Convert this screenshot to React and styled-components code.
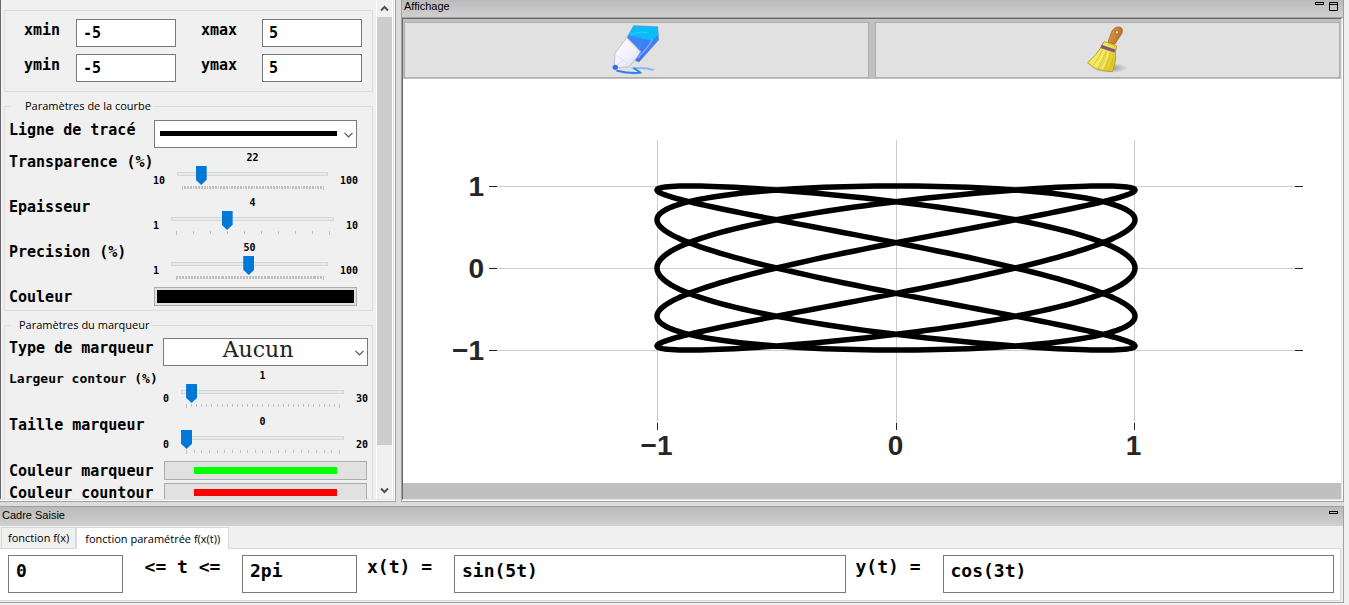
import React, { useState } from 'react';
import styled, { createGlobalStyle } from 'styled-components';

const mono = '"DejaVu Sans Mono", monospace';
const ui = '"Open Sans", "Noto Sans", sans-serif';

const GlobalStyle = createGlobalStyle`
  * {
    box-sizing: border-box;
  }
  body {
    margin: 0;
    background: #f0f0f0;
    color: #000;
    font-family: ${ui};
  }
  button, input, select {
    font: inherit;
    color: inherit;
    margin: 0;
  }
`;

const Slider = ({ id, min, max, start, loose }) => {
  const [value, setValue] = useState(start);
  const steps = max - min;
  const ticks = Array.from({ length: steps + 1 }, (_, i) => i);

  return (
    <SliderWrapper $loose={loose}>
      <span>{min}</span>
      <div className="track">
        <output htmlFor={id}>{value}</output>
        <Range
          type="range"
          id={id}
          min={min}
          max={max}
          value={value}
          onChange={(e) => setValue(Number(e.target.value))}
        />
        <svg height="5" aria-hidden="true">
          {ticks.map((i) => (
            <rect
              key={i}
              x={`${(i / steps) * 100}%`}
              width="1"
              height={i === 0 || i === steps ? 4 : 3}
            />
          ))}
        </svg>
      </div>
      <span>{max}</span>
    </SliderWrapper>
  );
};

const Chevron = () => (
  <svg width="9" height="6" viewBox="0 0 9 6" aria-hidden="true">
    <path d="M0.5 0.8 L4.5 4.8 L8.5 0.8" fill="none" stroke="#505050" strokeWidth="1.2" />
  </svg>
);

const TitleBar = ({ title, top, canMaximize }) => (
  <Title $top={top}>
    <h2>{title}</h2>
    <button type="button" aria-label="Réduire">
      <svg width="9" height="3" viewBox="0 0 9 3">
        <rect x="0.5" y="0.5" width="8" height="2" fill="none" stroke="#000" />
      </svg>
    </button>
    {canMaximize && (
      <button type="button" aria-label="Agrandir">
        <svg width="9" height="9" viewBox="0 0 9 9">
          <path d="M0.5 0.5 H8.5 V8.5 H0.5 Z M0.5 2.5 H8.5" fill="none" stroke="#000" />
        </svg>
      </button>
    )}
  </Title>
);

const PenIcon = () => (
  <svg width="52" height="52" viewBox="60 72 156 156" aria-hidden="true">
    <defs>
      <linearGradient id="penBody" x1="0" y1="0" x2="1" y2="1">
        <stop offset="0" stopColor="#ffffff" />
        <stop offset="0.6" stopColor="#f0effc" />
        <stop offset="1" stopColor="#cfcef2" />
      </linearGradient>
      <linearGradient id="penCap" x1="1" y1="0" x2="0" y2="1">
        <stop offset="0" stopColor="#2f86f5" />
        <stop offset="0.5" stopColor="#3f7cf8" />
        <stop offset="1" stopColor="#2f6ff0" />
      </linearGradient>
    </defs>
    <path d="M76 212 C96 219 122 221 147 218 C143 212 134 208 128 205 C148 203 168 204 188 210" fill="none" stroke="#8db8f2" strokeWidth="6" />
    <path d="M77 212 C98 217 122 220 148 218 C142 212 134 208 128 204" fill="none" stroke="#2f7de8" strokeWidth="5" />
    <path d="M107 113 L72 160 L70 197 L78 202 L114 201 L150 158 Z" fill="url(#penBody)" stroke="#a9a9bd" strokeWidth="2" />
    <path d="M76 166 L98 180 L112 199 M98 180 L76 198" fill="none" stroke="#dad9ee" strokeWidth="2" />
    <path d="M128 77 L200 80 L203 120 L144 186 L133 182 L150 154 L109 112 Z" fill="url(#penCap)" stroke="#7d94b5" strokeWidth="2" />
    <path d="M129 78 L199 81 L202 106 L180 121 L126 112 L110 108 Z" fill="#09bdfb" />
    <path d="M109 107 L122 106 L158 118 L148 153 Z" fill="#3c86fa" />
    <path d="M184 116 C178 138 158 152 141 174" fill="none" stroke="#a7c7ff" strokeWidth="5" opacity="0.55" />
    <path d="M119 106 C130 98 150 94 168 98" fill="none" stroke="#6fdcff" strokeWidth="3" opacity="0.5" />
    <circle cx="73" cy="202" r="8" fill="#2f74dd" />
  </svg>
);

const BroomIcon = () => (
  <svg width="52" height="52" viewBox="34 72 156 156" aria-hidden="true">
    <defs>
      <radialGradient id="broomShadow">
        <stop offset="0" stopColor="#8f8f8f" />
        <stop offset="1" stopColor="#8f8f8f" stopOpacity="0" />
      </radialGradient>
      <linearGradient id="broomHandle" x1="0" y1="0" x2="1" y2="0.4">
        <stop offset="0" stopColor="#e3a54c" />
        <stop offset="1" stopColor="#b96f1c" />
      </linearGradient>
      <linearGradient id="broomStraw" x1="0" y1="0" x2="1" y2="0.5">
        <stop offset="0" stopColor="#f2e04c" />
        <stop offset="0.5" stopColor="#f6ea62" />
        <stop offset="1" stopColor="#e0c824" />
      </linearGradient>
    </defs>
    <ellipse cx="117" cy="204" rx="54" ry="15" fill="url(#broomShadow)" />
    <path d="M112 126 L124 93 C130 83 140 79 149 82 C158 86 156 97 152 103 L132 133 Z" fill="url(#broomHandle)" stroke="#945a1d" strokeWidth="2" />
    <ellipse cx="139" cy="97" rx="4" ry="6" fill="#e9e4dc" stroke="#8b5a20" strokeWidth="2" />
    <path d="M100 125 L138 138 L134 155 C137 178 132 197 125 215 L99 212 L81 208 L65 200 L51 188 C69 171 83 156 92 140 Z" fill="url(#broomStraw)" stroke="#b5a032" strokeWidth="3" />
    <path d="M95 150 C86 170 77 184 66 198 M107 154 C98 176 91 190 82 207 M119 158 C114 178 109 195 100 211 M128 160 C128 180 122 196 113 213" fill="none" stroke="#cdb526" strokeWidth="2" />
    <path d="M101 152 C94 172 84 188 74 202 M113 156 C109 176 101 196 94 208" fill="none" stroke="#fbf58a" strokeWidth="3" />
    <path d="M93 135 L133 149 L131 157 L91 144 Z" fill="#80548c" stroke="#5f3b6b" strokeWidth="1" />
  </svg>
);

// x = sin(5t), y = cos(3t) for t in [0, 2pi]
const curvePoints = Array.from({ length: 721 }, (_, i) => {
  const t = (i / 720) * 2 * Math.PI;
  const x = 493 + 239 * Math.sin(5 * t);
  const y = 189 - 82 * Math.cos(3 * t);
  return `${x.toFixed(2)},${y.toFixed(2)}`;
}).join(' ');

const xAxis = [
  { at: 254.5, label: '−1' },
  { at: 493.5, label: '0' },
  { at: 731.5, label: '1' },
];
const yAxis = [
  { at: 107.5, label: '1' },
  { at: 189.5, label: '0' },
  { at: 271.5, label: '−1' },
];

const Plot = () => (
  <PlotSvg viewBox="0 0 938 404" role="img" aria-label="Courbe paramétrée">
    {xAxis.map(({ at, label }) => (
      <g key={label}>
        <path className="grid" d={`M${at} 61 V344`} />
        <path className="tick" d={`M${at} 344 V351`} />
        <text x={at - 1} y="376" textAnchor="middle">{label}</text>
      </g>
    ))}
    {yAxis.map(({ at, label }) => (
      <g key={label}>
        <path className="grid" d={`M94 ${at} H892`} />
        <path className="tick" d={`M86 ${at} H94 M892 ${at} H900`} />
        <text x="81" y={at + 9} textAnchor="end">{label}</text>
      </g>
    ))}
    <polyline points={curvePoints} />
  </PlotSvg>
);

const App = () => {
  const [tab, setTab] = useState('param');

  return (
    <Page>
      <GlobalStyle />
      <Workspace>
        <Sidebar>
          <div className="content">
            <Bounds>
              <label htmlFor="xmin">xmin</label>
              <TextBox id="xmin" defaultValue="-5" />
              <label htmlFor="xmax">xmax</label>
              <TextBox id="xmax" defaultValue="5" />
              <label htmlFor="ymin">ymin</label>
              <TextBox id="ymin" defaultValue="-5" />
              <label htmlFor="ymax">ymax</label>
              <TextBox id="ymax" defaultValue="5" />
            </Bounds>

            <Group $top={6}>
              <Legend $indent={14}>Paramètres de la courbe</Legend>
              <Rows $label={144} $gap={4}>
                <Label htmlFor="line">Ligne de tracé</Label>
                <Picker $inset>
                  <select id="line" defaultValue="solid">
                    <option value="solid" aria-label="Trait plein" />
                  </select>
                  <i className="line" />
                  <Chevron />
                </Picker>
                <Label htmlFor="alpha">Transparence (%)</Label>
                <Slider id="alpha" min={10} max={100} start={22} />
                <Label htmlFor="width">Epaisseur</Label>
                <Slider id="width" min={1} max={10} start={4} />
                <Label htmlFor="precision">Precision (%)</Label>
                <Slider id="precision" min={1} max={100} start={50} />
                <Label htmlFor="color">Couleur</Label>
                <ColorButton type="button" id="color" $color="#000" $full />
              </Rows>
            </Group>

            <Group $top={5}>
              <Legend $indent={8}>Paramètres du marqueur</Legend>
              <Rows $label={154} $gap={3}>
                <Label htmlFor="marker">Type de marqueur</Label>
                <Picker>
                  <select id="marker" defaultValue="none">
                    <option value="none">Aucun</option>
                  </select>
                  <Chevron />
                </Picker>
                <Label htmlFor="edge" $small>Largeur contour (%)</Label>
                <Slider id="edge" min={0} max={30} start={1} loose />
                <Label htmlFor="size">Taille marqueur</Label>
                <Slider id="size" min={0} max={20} start={0} loose />
                <Label htmlFor="markerColor">Couleur marqueur</Label>
                <ColorButton type="button" id="markerColor" $color="#0f0" />
                <Label htmlFor="edgeColor">Couleur countour</Label>
                <ColorButton type="button" id="edgeColor" $color="#f00" />
              </Rows>
            </Group>
          </div>
          <ScrollBar>
            <button type="button" aria-label="Défiler vers le haut">
              <svg width="9" height="7" viewBox="0 0 9 7">
                <path d="M1 5.5 L4.5 2 L8 5.5" />
              </svg>
            </button>
            <div className="rail">
              <div className="thumb" />
            </div>
            <button type="button" aria-label="Défiler vers le bas">
              <svg width="9" height="7" viewBox="0 0 9 7">
                <path d="M1 1.5 L4.5 5 L8 1.5" />
              </svg>
            </button>
          </ScrollBar>
        </Sidebar>

        <Display>
          <TitleBar title="Affichage" top canMaximize />
          <div className="frame">
            <ToolBar>
              <button type="button" aria-label="Tracer">
                <PenIcon />
              </button>
              <button type="button" aria-label="Effacer">
                <BroomIcon />
              </button>
            </ToolBar>
            <Plot />
            <div className="status" />
          </div>
        </Display>
      </Workspace>

      <Entry>
        <TitleBar title="Cadre Saisie" />
        <Tabs role="tablist">
          <Tab type="button" role="tab" $active={tab === 'fx'} onClick={() => setTab('fx')}>
            fonction f(x)
          </Tab>
          <Tab type="button" role="tab" $active={tab === 'param'} onClick={() => setTab('param')}>
            fonction paramétrée f(x(t))
          </Tab>
        </Tabs>
        <Formula>
          <FormulaBox aria-label="t minimum" defaultValue="0" />
          <label className="range" htmlFor="tmax">&lt;= t &lt;=</label>
          <FormulaBox id="tmax" defaultValue="2pi" />
          <label htmlFor="xt">x(t) =</label>
          <FormulaBox id="xt" defaultValue="sin(5t)" $wide />
          <label htmlFor="yt">y(t) =</label>
          <FormulaBox id="yt" defaultValue="cos(3t)" $wide />
        </Formula>
      </Entry>
    </Page>
  );
};

const Page = styled.main`
  height: 100vh;
  padding: 0 5px 2px 0;
  display: flex;
  flex-direction: column;
  gap: 4px;
  background: linear-gradient(#dcdcdc, #dcdcdc) no-repeat 0 0 / calc(100% - 5px) calc(100% - 2px) #f0f0f0;
`;

const Workspace = styled.div`
  flex: 1;
  min-height: 0;
  display: flex;
  gap: 5px;
`;

const Sidebar = styled.aside`
  width: 396px;
  flex: none;
  display: flex;
  background: #f0f0f0;
  border: solid #a0a0a0;
  border-width: 0 1px 1px 0;
  box-shadow: inset -1px -1px #fff, inset -2px -2px #e3e3e3, inset 1px 0 #696969;
  padding: 0 2px 2px 1px;
  .content {
    flex: 1;
    min-width: 0;
    overflow: hidden;
    padding: 10px 3px 0;
  }
`;

const Bounds = styled.div`
  display: grid;
  grid-template-columns: 52px 125px 61px 100px;
  row-gap: 7px;
  border: 1px solid #dcdcdc;
  padding: 8px 0 9px 19px;
  font: bold 15px/23px ${mono};
  input {
    width: 100px;
  }
`;

const TextBox = styled.input.attrs({ type: 'text' })`
  height: 28px;
  padding: 0 6px;
  border: 1px solid #7a7a7a;
  border-radius: 0;
  background: #fff;
`;

const Group = styled.fieldset`
  min-width: 0;
  margin: 6px 0 0;
  padding: ${(p) => p.$top}px 0 4px 4px;
  border: 1px solid #dcdcdc;
`;

const Legend = styled.legend`
  margin-left: 2px;
  padding: 0 2px 0 ${(p) => p.$indent}px;
  font-size: 11px;
  line-height: 16px;
`;

const Rows = styled.div`
  display: grid;
  grid-template-columns: ${(p) => p.$label}px 205px;
  row-gap: ${(p) => p.$gap}px;
`;

const Label = styled.label`
  margin-top: 1px;
  font: bold ${(p) => (p.$small ? 13 : 15)}px/18px ${mono};
  white-space: nowrap;
`;

const Picker = styled.div`
  display: grid;
  align-items: center;
  height: 28px;
  margin: 0 ${(p) => (p.$inset ? 1 : 0)}px;
  select {
    grid-area: 1 / 1;
    width: 100%;
    height: 28px;
    padding: 0 15px 4px 0;
    appearance: none;
    background: #fff;
    border: 1px solid #7a7a7a;
    border-radius: 0;
    color: #222;
    font: 22px/22px "DejaVu Serif", serif;
    text-align-last: center;
  }
  .line, svg {
    grid-area: 1 / 1;
    pointer-events: none;
  }
  .line {
    height: 5px;
    margin: 0 20px 1px 6px;
    background: #000;
  }
  svg {
    justify-self: end;
    margin: 1px 4px 0 0;
  }
`;

const SliderWrapper = styled.div`
  display: flex;
  align-items: flex-end;
  gap: 12px;
  padding: ${(p) => (p.$loose ? '1px 0 3px' : '0 0 2px')};
  font: bold 10px/12px ${mono};
  span {
    margin-bottom: 4px;
  }
  .track {
    flex: 1;
    display: flex;
    flex-direction: column;
    output {
      text-align: center;
      margin-bottom: 2px;
    }
    svg {
      width: calc(100% - 10px);
      margin: 1px 5px 0;
      fill: #c0c0c0;
      shape-rendering: crispEdges;
      overflow: visible;
    }
  }
`;

const Range = styled.input`
  appearance: none;
  width: 100%;
  height: 19px;
  background:
    linear-gradient(#e7eaea, #e7eaea) no-repeat 1px 7px / calc(100% - 2px) 2px,
    linear-gradient(#d6d6d6, #d6d6d6) no-repeat 0 6px / 100% 4px;
  &::-webkit-slider-thumb {
    appearance: none;
    width: 11px;
    height: 19px;
    background: #0078d7;
    clip-path: polygon(0 0, 100% 0, 100% 72%, 50% 100%, 0 72%);
  }
`;

const ColorButton = styled.button`
  height: 19px;
  margin: 0 1px;
  padding: ${(p) => (p.$full ? '2px' : '5px 29px')};
  border: 1px solid #adadad;
  background: #e1e1e1;
  display: flex;
  &::before {
    content: '';
    flex: 1;
    align-self: stretch;
    background: ${(p) => p.$color};
  }
`;

const ScrollBar = styled.div`
  width: 17px;
  display: flex;
  flex-direction: column;
  border: solid #fff;
  border-width: 0 1px;
  button {
    height: 17px;
    padding: 0;
    border: 0;
    background: none;
    display: flex;
    align-items: center;
    justify-content: center;
  }
  path {
    fill: none;
    stroke: #505050;
    stroke-width: 2;
  }
  .rail {
    flex: 1;
  }
  .thumb {
    height: 92%;
    background: #cdcdcd;
  }
`;

const Display = styled.section`
  flex: 1;
  min-width: 0;
  display: flex;
  flex-direction: column;
  background: #fff;
  border: solid #a0a0a0;
  border-width: 0 1px 1px;
  .frame {
    flex: 1;
    min-height: 0;
    display: flex;
    flex-direction: column;
    margin: 0 1px 1px 0;
    border: 1px solid #e3e3e3;
    border-top-color: #696969;
    border-left-color: #696969;
  }
  .status {
    height: 16px;
    background: #c0c0c0;
  }
`;

const Title = styled.header`
  height: ${(p) => (p.$top ? 18 : 19)}px;
  padding: ${(p) => (p.$top ? 0 : 2)}px 5px 0 2px;
  display: flex;
  align-items: flex-start;
  gap: 5px;
  background: linear-gradient(#bababa, #d0d0d0);
  border-bottom: ${(p) => (p.$top ? '1px solid #a0a0a0' : 0)};
  h2 {
    flex: 1;
    margin: 0;
    font: 11px/12px "Liberation Sans", sans-serif;
  }
  button {
    display: flex;
    margin-top: 2px;
    padding: 0;
    border: 0;
    background: none;
  }
`;

const ToolBar = styled.div`
  display: flex;
  gap: 6px;
  padding: 3px 1px 1px;
  background: #c0c0c0;
  button {
    flex: 1;
    height: 56px;
    padding: 0;
    display: flex;
    align-items: center;
    justify-content: center;
    background: #e1e1e1;
    border: 1px solid #adadad;
  }
`;

const PlotSvg = styled.svg`
  flex: 1;
  min-height: 0;
  width: 100%;
  background: #fff;
  .grid {
    stroke: #ccc;
  }
  .tick {
    stroke: #262626;
  }
  text {
    fill: #262626;
    font: bold 28px "Liberation Sans", Arial, sans-serif;
  }
  polyline {
    fill: none;
    stroke: #000;
    stroke-width: 5.5;
    stroke-linejoin: round;
  }
`;

const Entry = styled.section`
  background: #f0f0f0;
  border: solid #a0a0a0;
  border-width: 1px 1px 1px 0;
  padding-bottom: 1px;
`;

const Tabs = styled.div`
  display: flex;
  align-items: flex-end;
  padding: 1px 0 0 1px;
`;

const Tab = styled.button`
  height: ${(p) => (p.$active ? 22 : 21)}px;
  margin-bottom: ${(p) => (p.$active ? -1 : 0)}px;
  padding: 0 ${(p) => (p.$active ? 8 : 6)}px;
  border: 1px solid #d9d9d9;
  border-bottom: 0;
  background: ${(p) => (p.$active ? '#fff' : '#f0f0f0')};
  font-size: 11px;
  line-height: 18px;
  white-space: nowrap;
  z-index: 1;
`;

const Formula = styled.div`
  display: flex;
  align-items: flex-start;
  margin-right: 2px;
  padding: 6px 6px 7px 8px;
  background: #fff;
  border: solid #d9d9d9;
  border-width: 1px 1px 1px 0;
  font: bold 18px/24px ${mono};
  label {
    flex: none;
    width: 97px;
    padding-left: 10px;
    white-space: nowrap;
  }
  .range {
    width: 119px;
    padding: 0;
    text-align: center;
  }
`;

const FormulaBox = styled(TextBox)`
  width: 115px;
  min-width: 0;
  flex: ${(p) => (p.$wide ? '1' : 'none')};
  height: 38px;
  padding: 0 7px 8px;
`;

export default App;
